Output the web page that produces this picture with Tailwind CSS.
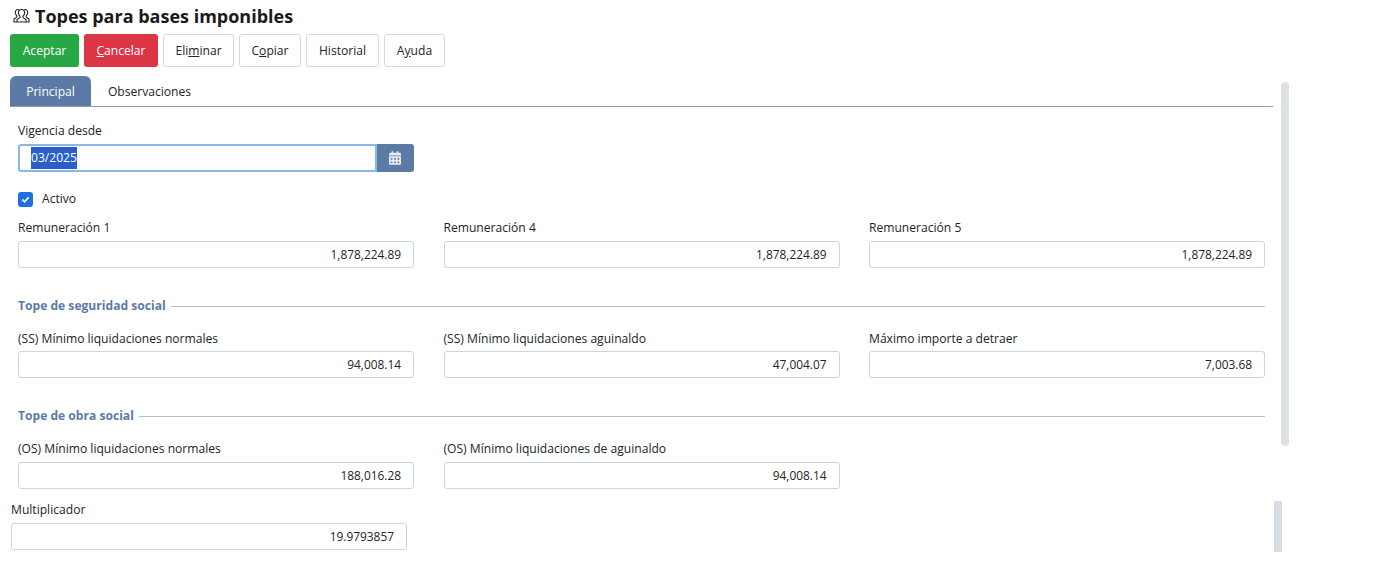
<!DOCTYPE html>
<html lang="es">
<head>
    <meta charset="UTF-8">
    <title>Topes para bases imponibles</title>
    <script src="https://cdn.jsdelivr.net/npm/@tailwindcss/browser@4"></script>
</head>
<body class="bg-white text-[#212529] font-['Open_Sans','Liberation_Sans',sans-serif] text-[12.1px] overflow-hidden">
<div class="relative w-[1373px] h-[562px] overflow-hidden">
    <!-- title -->
    <div class="h-[34px] pl-[13px] flex items-center gap-[5px] pb-[3px]">
        <svg class="w-[17px] h-[16px]" viewBox="0 0 17 16" fill="none" stroke="#212529" stroke-width="1.100" stroke-linejoin="round">
            <path d="M5.800 1.800C3.800 1 2.200 2.400 2.300 4.500c.1 1.500.8 2.600 1.500 3.300v1.300L1 11v3h15v-3l-2.800-1.900V7.800c.7-.7 1.400-1.800 1.500-3.300.1-2.100-1.500-3.500-3.500-2.700"/>
            <path d="M8.500 1.500c-2 0-3.200 1.500-3.100 3.400.1 1.500.8 2.700 1.600 3.300v1.400l-3 1.900V14M8.500 1.500c2 0 3.200 1.500 3.100 3.400-.1 1.500-.8 2.700-1.600 3.300v1.400l3 1.900V14"/>
        </svg>
        <h1 class="text-[18px] font-bold leading-none text-[#1a1a1a]">Topes para bases imponibles</h1>
    </div>

    <!-- toolbar -->
    <div class="flex gap-[5px] pl-[10px] h-[33px]">
        <button class="w-[69px] pt-[1px] rounded-[3px] bg-[#28a745] text-white">Aceptar</button>
        <button class="w-[74px] pt-[1px] rounded-[3px] bg-[#dc3545] text-white"><u>C</u>ancelar</button>
        <button class="w-[71px] pt-[1px] rounded-[3px] border border-[#d5d8db] bg-white">Eli<u>m</u>inar</button>
        <button class="w-[62px] pt-[1px] rounded-[3px] border border-[#d5d8db] bg-white">C<u>o</u>piar</button>
        <button class="w-[73px] pt-[1px] rounded-[3px] border border-[#d5d8db] bg-white">Historial</button>
        <button class="w-[61px] pt-[1px] rounded-[3px] border border-[#d5d8db] bg-white">A<u>y</u>uda</button>
    </div>

    <!-- tabs -->
    <div class="mt-[9px] ml-[10px] w-[1263px] h-[31px] flex border-b border-[#8f9aa3]">
        <div class="w-[81px] h-[30px] pt-[2px] rounded-t-[6px] bg-[#5b7ba6] text-white flex items-center justify-center">Principal</div>
        <div class="w-[117px] h-[30px] pt-[2px] flex items-center justify-center">Observaciones</div>
    </div>

    <!-- form -->
    <div class="pl-[18px] w-[1265px]">
        <label class="block mt-[16px] h-[16px] leading-[16px]">Vigencia desde</label>
        <div class="mt-[5px] w-[396px] h-[28px] flex">
            <div class="flex-1 border-2 border-[#8ab6e8] rounded-l-[3px] pl-[11px] flex items-center bg-white">
                <span class="bg-[#2a5fc9] text-white leading-[22px] h-[22px]">03/2025</span>
            </div>
            <div class="w-[37px] pr-[1px] bg-[#5b7ba6] rounded-r-[3px] flex items-center justify-center">
                <svg class="w-[12px] h-[14px]" viewBox="0 0 448 512" fill="#e8edf3"><path d="M0 464c0 26.500 21.500 48 48 48h352c26.500 0 48-21.500 48-48V192H0v272zm320-196c0-6.600 5.400-12 12-12h40c6.600 0 12 5.400 12 12v40c0 6.600-5.400 12-12 12h-40c-6.600 0-12-5.400-12-12v-40zm0 128c0-6.600 5.400-12 12-12h40c6.600 0 12 5.400 12 12v40c0 6.600-5.400 12-12 12h-40c-6.600 0-12-5.400-12-12v-40zM192 268c0-6.600 5.400-12 12-12h40c6.600 0 12 5.400 12 12v40c0 6.600-5.400 12-12 12h-40c-6.600 0-12-5.400-12-12v-40zm0 128c0-6.600 5.400-12 12-12h40c6.600 0 12 5.400 12 12v40c0 6.600-5.400 12-12 12h-40c-6.600 0-12-5.400-12-12v-40zM64 268c0-6.600 5.400-12 12-12h40c6.600 0 12 5.400 12 12v40c0 6.600-5.400 12-12 12H76c-6.600 0-12-5.400-12-12v-40zm0 128c0-6.600 5.400-12 12-12h40c6.600 0 12 5.400 12 12v40c0 6.600-5.400 12-12 12H76c-6.600 0-12-5.400-12-12v-40zM400 64h-48V16c0-8.800-7.200-16-16-16h-32c-8.800 0-16 7.200-16 16v48H160V16c0-8.800-7.200-16-16-16h-32c-8.800 0-16 7.200-16 16v48H48C21.500 64 0 85.500 0 112v48h448v-48c0-26.500-21.500-48-48-48z"/></svg>
            </div>
        </div>

        <div class="mt-[20px] h-[15px] flex items-center gap-[9px]">
            <span class="w-[15px] h-[15px] rounded-[3px] bg-[#1f6fe0] flex items-center justify-center">
                <svg class="w-[9px] h-[9px]" viewBox="0 0 10 10" fill="none" stroke="white" stroke-width="2"><path d="M1.500 5.200 4 7.500 8.500 2.500"/></svg>
            </span>
            <span>Activo</span>
        </div>

        <!-- row 1 -->
        <div class="mt-[13px] grid grid-cols-[396px_396px_396px] gap-x-[29.500px]">
            <div>
                <label class="block h-[16px] leading-[16px]">Remuneración 1</label>
                <div class="mt-[5px] h-[27px] text-[11.900px] border border-[#ced4da] rounded-[3px] flex items-center justify-end pr-[12px]">1,878,224.89</div>
            </div>
            <div>
                <label class="block h-[16px] leading-[16px]">Remuneración 4</label>
                <div class="mt-[5px] h-[27px] text-[11.900px] border border-[#ced4da] rounded-[3px] flex items-center justify-end pr-[12px]">1,878,224.89</div>
            </div>
            <div>
                <label class="block h-[16px] leading-[16px]">Remuneración 5</label>
                <div class="mt-[5px] h-[27px] text-[11.900px] border border-[#ced4da] rounded-[3px] flex items-center justify-end pr-[12px]">1,878,224.89</div>
            </div>
        </div>

        <!-- seguridad social -->
        <div class="mt-[30px] h-[16px] flex items-center gap-[5px]">
            <span class="font-bold text-[#5b7ba6]">Tope de seguridad social</span>
            <span class="flex-1 h-px bg-[#b4bfcc]"></span>
        </div>
        <div class="mt-[17px] grid grid-cols-[396px_396px_396px] gap-x-[29.500px]">
            <div>
                <label class="block h-[16px] leading-[16px]">(SS) Mínimo liquidaciones normales</label>
                <div class="mt-[4px] h-[27px] text-[11.900px] border border-[#ced4da] rounded-[3px] flex items-center justify-end pr-[12px]">94,008.14</div>
            </div>
            <div>
                <label class="block h-[16px] leading-[16px]">(SS) Mínimo liquidaciones aguinaldo</label>
                <div class="mt-[4px] h-[27px] text-[11.900px] border border-[#ced4da] rounded-[3px] flex items-center justify-end pr-[12px]">47,004.07</div>
            </div>
            <div>
                <label class="block h-[16px] leading-[16px]">Máximo importe a detraer</label>
                <div class="mt-[4px] h-[27px] text-[11.900px] border border-[#ced4da] rounded-[3px] flex items-center justify-end pr-[12px]">7,003.68</div>
            </div>
        </div>

        <!-- obra social -->
        <div class="mt-[30px] h-[16px] flex items-center gap-[5px]">
            <span class="font-bold text-[#5b7ba6]">Tope de obra social</span>
            <span class="flex-1 h-px bg-[#b4bfcc]"></span>
        </div>
        <div class="mt-[17px] grid grid-cols-[396px_396px_396px] gap-x-[29.500px]">
            <div>
                <label class="block h-[16px] leading-[16px]">(OS) Mínimo liquidaciones normales</label>
                <div class="mt-[5px] h-[27px] text-[11.900px] border border-[#ced4da] rounded-[3px] flex items-center justify-end pr-[12px]">188,016.28</div>
            </div>
            <div>
                <label class="block h-[16px] leading-[16px]">(OS) Mínimo liquidaciones de aguinaldo</label>
                <div class="mt-[5px] h-[27px] text-[11.900px] border border-[#ced4da] rounded-[3px] flex items-center justify-end pr-[12px]">94,008.14</div>
            </div>
        </div>
    </div>

    <div class="pl-[11px] mt-[13px] w-[407px]">
        <label class="block h-[16px] leading-[16px]">Multiplicador</label>
        <div class="mt-[5px] h-[27px] text-[11.900px] border border-[#ced4da] rounded-[3px] flex items-center justify-end pr-[12px]">19.9793857</div>
    </div>

    <!-- scrollbars -->
    <div class="absolute left-[1281px] top-[82px] w-[8px] h-[364px] rounded-[4px] bg-[#dee2e6]"></div>
    <div class="absolute left-[1274px] top-[501px] w-[8px] h-[51px] bg-[#d8dee3]"></div>
</div>
</body>
</html>
